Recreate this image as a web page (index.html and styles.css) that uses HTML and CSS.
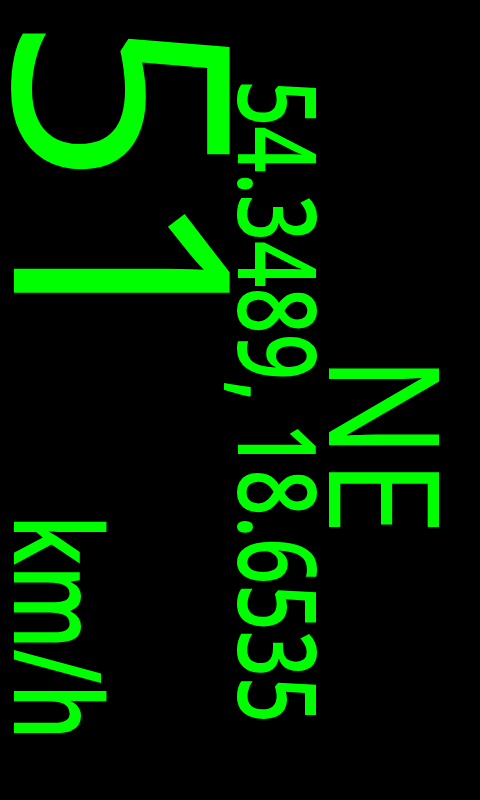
FILE: index.html
```html
<!DOCTYPE html>
<html lang="en">
<head>
<meta charset="utf-8">
<title>Speedometer</title>
<link rel="stylesheet" href="styles.css">
</head>
<body>
<div class="screen">
  <div class="stage">
    <div class="row heading-row"><span class="heading">NE</span></div>
    <div class="row coords-row"><span class="coords">54.3489, 18.6535</span></div>
    <div class="row speed-row">
      <span class="speed">51</span>
      <span class="unit">km/h</span>
    </div>
  </div>
</div>
</body>
</html>
```

FILE: styles.css
```css
html, body {
  margin: 0;
  padding: 0;
  background: #000;
  width: 480px;
  height: 800px;
  overflow: hidden;
}
.screen {
  width: 480px;
  height: 800px;
  background: #000;
  overflow: hidden;
}
.stage {
  width: 800px;
  height: 480px;
  transform-origin: 0 0;
  transform: translateX(480px) rotate(90deg);
  display: flex;
  flex-direction: column;
  color: #00ff00;
  font-family: "Open Sans", "Noto Sans", sans-serif;
  white-space: nowrap;
}
.row {
  display: flex;
}
.heading-row {
  height: 183px;
  line-height: 183px;
  padding-left: 355px;
}
.heading {
  display: inline-block;
  font-size: 153px;
  font-weight: 500;
  transform-origin: left center;
  transform: scaleX(0.9);
}
.coords-row {
  height: 33px;
  line-height: 33px;
  padding-left: 80px;
}
.coords {
  display: inline-block;
  font-size: 109px;
  font-weight: 600;
  transform-origin: left center;
  transform: scaleX(0.743);
}
.speed-row {
  height: 265px;
  line-height: 265px;
  align-items: baseline;
  justify-content: space-between;
  padding-left: 14px;
  padding-right: 60px;
}
.speed {
  font-size: 302px;
}
.unit {
  display: inline-block;
  font-size: 121px;
  font-weight: 600;
  transform-origin: right center;
  transform: scaleX(0.73);
}
```
